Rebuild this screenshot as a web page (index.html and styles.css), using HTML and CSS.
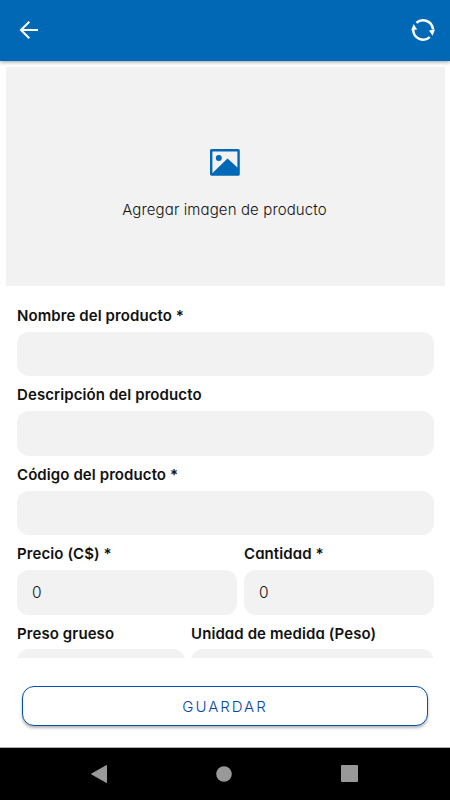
FILE: index.html
```html
<!DOCTYPE html>
<html lang="es">

<head>
  <meta charset="UTF-8">
  <meta name="viewport" content="width=device-width, initial-scale=1.0">
  <title>Producto</title>
  <link rel="stylesheet" href="styles.css">
</head>

<body>
  <header class="toolbar">
    <svg class="back" width="20" height="20" viewBox="0 0 20 20" fill="none" stroke="#fff" stroke-width="2">
      <path d="M19 10H2.5M10.3 1.8L2 10l8.3 8.2" />
    </svg>
    <svg class="sync" width="24" height="24" viewBox="0 0 24 24">
      <path d="M5.4 4.8A10 10 0 0 1 22 11.5M18.8 19.1A10 10 0 0 1 2.2 12" fill="none" stroke="#fff" stroke-width="2.5" />
      <path d="M18 12.4l6-.9-2.4 6.3zM6.2 11.4l-6 .9 2.4-6.3z" fill="#fff" />
    </svg>
  </header>
  <main class="content">
    <div class="picture">
      <svg width="30" height="27" viewBox="0 0 30 27">
        <rect x="1.2" y="1.2" width="27.4" height="24.4" rx=".4" fill="none" stroke="#0068b4" stroke-width="2.4" />
        <circle cx="8.8" cy="9" r="3" fill="#0068b4" />
        <path d="M2 24.5L17.5 9.5l10.5 9.5V25H2z" fill="#0068b4" />
      </svg>
      <span class="picture-text">Agregar imagen de producto</span>
    </div>
    <form class="form">
      <div class="field">
        <label for="nombre">Nombre del producto *</label>
        <input id="nombre" type="text">
      </div>
      <div class="field">
        <label for="descripcion">Descripción del producto</label>
        <input id="descripcion" type="text">
      </div>
      <div class="field">
        <label for="codigo">Código del producto *</label>
        <input id="codigo" type="text">
      </div>
      <div class="row row-price">
        <div class="field">
          <label for="precio">Precio (C$) *</label>
          <input id="precio" type="text" value="0">
        </div>
        <div class="field">
          <label for="cantidad">Cantidad *</label>
          <input id="cantidad" type="text" value="0">
        </div>
      </div>
      <div class="row row-weight">
        <div class="field">
          <label for="peso">Preso grueso</label>
          <input id="peso" type="text">
        </div>
        <div class="field">
          <label for="unidad">Unidad de medida (Peso)</label>
          <input id="unidad" type="text">
        </div>
      </div>
    </form>
  </main>
  <footer class="actions">
    <button class="save" type="button">GUARDAR</button>
  </footer>
  <nav class="navbar">
    <svg width="16" height="18" viewBox="0 0 16 18">
      <path d="M15.5.5v17L.5 9z" fill="#999" stroke="#999" stroke-linejoin="round" />
    </svg>
    <svg width="16" height="16" viewBox="0 0 16 16">
      <circle cx="8" cy="8" r="7.8" fill="#999" />
    </svg>
    <svg width="17" height="17" viewBox="0 0 17 17">
      <rect width="17" height="17" rx="1" fill="#999" />
    </svg>
  </nav>
</body>

</html>
```
FILE: styles.css
```css
* {
  box-sizing: border-box;
}

body {
  margin: 0;
  height: 800px;
  display: flex;
  flex-direction: column;
  overflow: hidden;
  background: #fff;
  color: #111;
  font-family: Inter, Lato, sans-serif;
  font-feature-settings: "cv11";
}

svg {
  display: block;
}

.toolbar {
  height: 61px;
  flex: none;
  display: flex;
  align-items: center;
  justify-content: space-between;
  padding: 0 15px 1px 19px;
  background: #0068b4;
  box-shadow: 0 1px 4px rgba(0, 0, 0, 0.4);
}

.content {
  height: 597px;
  flex: none;
  overflow: hidden;
  padding: 6px 5px 0 6px;
}

.picture {
  height: 219px;
  display: flex;
  flex-direction: column;
  align-items: center;
  padding: 82px 2px 0 0;
  gap: 23px;
  background: #f2f2f2;
}

.picture-text {
  font-size: 15px;
  line-height: 22px;
  font-weight: 300;
  letter-spacing: 0.12px;
}

.form {
  padding: 11px 11px 0;
}

.field {
  height: 79.4px;
  min-width: 0;
}

.field label {
  display: block;
  height: 34.8px;
  line-height: 38px;
  font-size: 15px;
  font-weight: 600;
  letter-spacing: 0.09px;
  white-space: nowrap;
}

.field input {
  display: block;
  width: 100%;
  height: 44.6px;
  border: 0;
  border-radius: 12px;
  padding: 0 15px;
  background: #f2f2f2;
  color: #111;
  font: 300 15.5px Inter, Lato, sans-serif;
}

.row {
  display: grid;
}

.row-price {
  grid-template-columns: 220px 190px;
  column-gap: 7px;
}

.row-weight {
  grid-template-columns: 168px 243px;
  column-gap: 6px;
}

.actions {
  height: 90px;
  flex: none;
  padding: 28px 22px 0;
  border-bottom: 1px solid #b0b0b0;
}

.save {
  display: block;
  width: 100%;
  height: 40px;
  border: 1px solid #0350b0;
  border-radius: 12px;
  background: #fff;
  color: #0345a8;
  font: 300 15px Inter, Lato, sans-serif;
  letter-spacing: 2px;
  box-shadow: 0 2px 3px rgba(0, 0, 0, 0.3);
}

.navbar {
  flex: 1;
  display: flex;
  align-items: center;
  justify-content: space-between;
  padding: 0 92px 1px 91px;
  background: #000;
}
```
